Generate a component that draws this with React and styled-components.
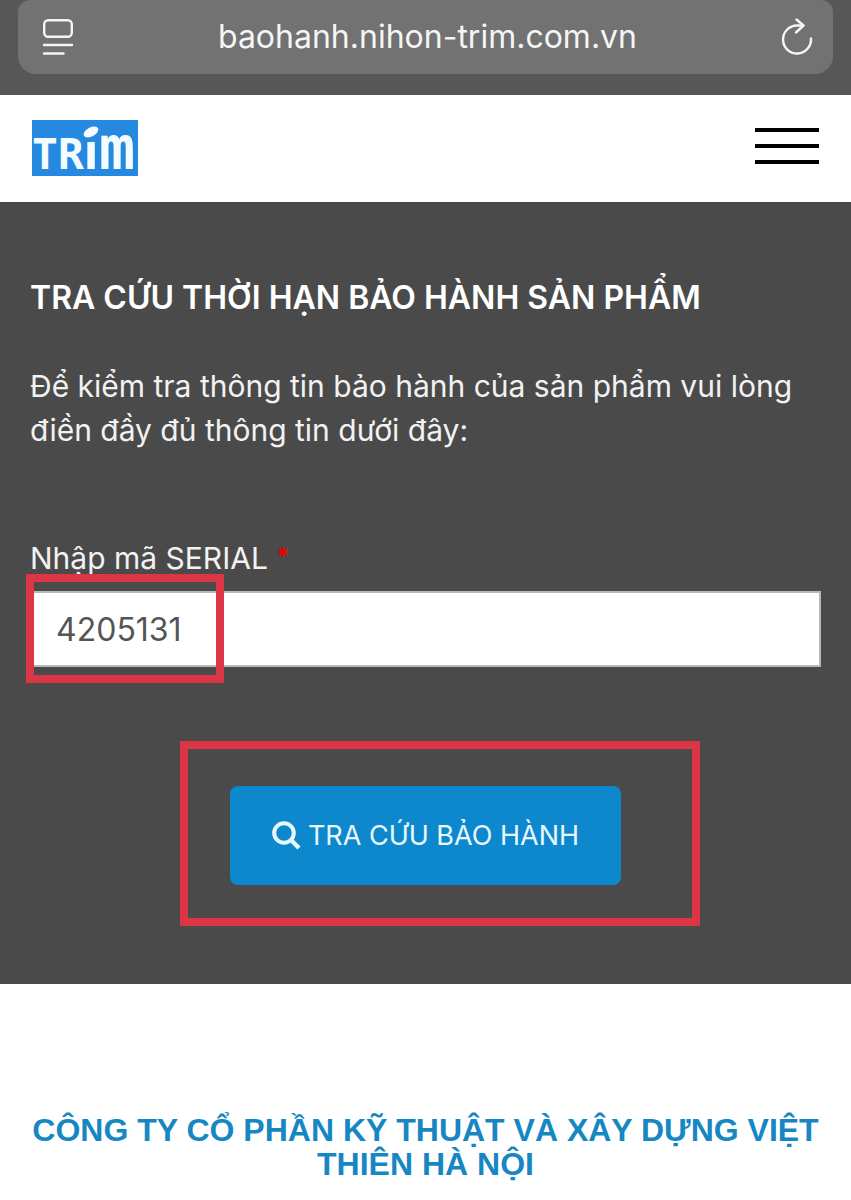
import React, { useState } from 'react'
import styled, { createGlobalStyle } from 'styled-components'

const GlobalStyle = createGlobalStyle`
  * {
    box-sizing: border-box;
  }

  body {
    margin: 0;
    background: #fff;
    font-family: Inter, 'Noto Sans', sans-serif;
  }
`

const BrowserBar = styled.div`
  background: #575757;
  padding: 0 18px 21px;
`

const AddressBar = styled.div`
  display: flex;
  align-items: center;
  justify-content: space-between;
  height: 74px;
  padding: 0 20px 0 24px;
  border-radius: 12px 12px 18px 18px;
  background: #727272;
  color: #f5f5f5;
`

const Address = styled.span`
  font-size: 32px;
  line-height: 40px;
`

const IconButton = styled.button`
  display: flex;
  padding: 0;
  border: 0;
  background: none;
  color: inherit;
  cursor: pointer;
`

const Header = styled.header`
  display: flex;
  align-items: center;
  justify-content: space-between;
  padding: 25px 32px 26px;
  background: #fff;
`

const LogoLink = styled.a`
  display: block;

  svg {
    display: block;
    overflow: visible;
  }
`

const MenuButton = styled.button`
  display: flex;
  flex-direction: column;
  gap: 12px;
  width: 64px;
  padding: 0 0 4px;
  border: 0;
  background: none;
  cursor: pointer;
`

const MenuLine = styled.span`
  width: 100%;
  height: 4px;
  background: #000;
`

const Panel = styled.main`
  padding: 74px 30px 99px;
  background: #4a4a4a;
  color: #fff;
`

const Title = styled.h1`
  margin: 0 0 44px;
  font-size: 32px;
  font-weight: 600;
  line-height: 44px;
`

const Intro = styled.p`
  margin: 0 0 90px;
  color: #f2f2f2;
  font-size: 30px;
  line-height: 44px;
`

const Label = styled.label`
  display: block;
  margin-bottom: 17px;
  color: #f2f2f2;
  font-size: 30px;
  line-height: 32px;
`

const Required = styled.span`
  color: #e60000;
  font-weight: 700;
  font-size: 24px;
  line-height: 0;
  vertical-align: 4px;
`

const Field = styled.div`
  position: relative;
  margin-bottom: 119px;
`

const Input = styled.input`
  display: block;
  width: 100%;
  height: 76px;
  padding: 0 24px;
  border: 2px solid #b9b9b9;
  border-radius: 0;
  background: #fff;
  color: #555;
  font-family: inherit;
  font-size: 32px;
  outline: none;
`

const Actions = styled.div`
  display: flex;
  justify-content: center;
`

const ButtonWrap = styled.div`
  position: relative;
`

const SubmitButton = styled.button`
  display: flex;
  align-items: center;
  gap: 7px;
  padding: 28px 42px;
  border: 0;
  border-radius: 8px;
  background: #0e88cc;
  color: #e8f8ff;
  font-family: inherit;
  font-size: 27px;
  line-height: 43px;
  white-space: nowrap;
  cursor: pointer;
`

// red frame drawn over the part of the page the reader should look at
const Highlight = styled.div`
  position: absolute;
  border: 8px solid #dc3545;
  pointer-events: none;
`

const FieldHighlight = styled(Highlight)`
  top: -17px;
  left: -4px;
  width: 198px;
  height: 109px;
`

const ButtonHighlight = styled(Highlight)`
  top: -45px;
  right: -79px;
  bottom: -41px;
  left: -50px;
`

const Footer = styled.footer`
  padding: 129px 30px 19px;
  color: #1787c3;
  font-family: 'Liberation Sans', Arial, sans-serif;
  font-size: 32px;
  font-weight: 700;
  line-height: 34px;
  text-align: center;
`

const ReaderIcon = () => (
  <svg width="32" height="38" viewBox="0 0 32 38" fill="none" stroke="currentColor" strokeWidth="2.4" strokeLinecap="round">
    <rect x="2.2" y="2.2" width="27.6" height="16.6" rx="4" />
    <path d="M2 27h28M2 35.5h19.5" />
  </svg>
)

const ReloadIcon = () => (
  <svg width="32" height="38" viewBox="0 0 32 38" fill="none" stroke="currentColor" strokeWidth="2.4" strokeLinecap="round" strokeLinejoin="round">
    <path d="M30 20.500A14 14 0 1 1 16 7.500H22" />
    <path d="M15.500 1.500L22.500 7.500L15 14.500" />
  </svg>
)

const SearchIcon = () => (
  <svg width="29" height="29" viewBox="0 0 29 29" fill="none" stroke="currentColor" strokeWidth="4">
    <circle cx="12" cy="12" r="9.800" />
    <path d="M19 19L27 27" strokeWidth="4.500" />
  </svg>
)

const Logo = () => (
  <svg width="106" height="56" viewBox="0 0 106 56" role="img" aria-label="Trim">
    <rect width="106" height="56" fill="#2489df" />
    <g fill="#f4fbff" fontFamily="'DejaVu Sans Mono', monospace" fontWeight="700">
      <text x="0" y="49" fontSize="43">T</text>
      <text x="26" y="49" fontSize="43">R</text>
      <text x="52" y="49" fontSize="52" fontFamily="Roboto, sans-serif">ı</text>
      <text x="67" y="49" fontSize="60">m</text>
    </g>
    <ellipse cx="59" cy="12" rx="8" ry="4.500" fill="#f4fbff" transform="rotate(-28 59 12)" />
  </svg>
)

const App = () => {
  const [serial, setSerial] = useState('4205131')

  return (
    <>
      <GlobalStyle />
      <BrowserBar>
        <AddressBar>
          <IconButton type="button" aria-label="Trình đọc"><ReaderIcon /></IconButton>
          <Address>baohanh.nihon-trim.com.vn</Address>
          <IconButton type="button" aria-label="Tải lại"><ReloadIcon /></IconButton>
        </AddressBar>
      </BrowserBar>
      <Header>
        <LogoLink href="#"><Logo /></LogoLink>
        <MenuButton type="button" aria-label="Menu">
          <MenuLine />
          <MenuLine />
          <MenuLine />
        </MenuButton>
      </Header>
      <Panel>
        <Title>TRA CỨU THỜI HẠN BẢO HÀNH SẢN PHẨM</Title>
        <Intro>
          Để kiểm tra thông tin bảo hành của sản phẩm vui lòng điền đầy đủ thông tin dưới đây:
        </Intro>
        <form onSubmit={e => e.preventDefault()}>
          <Label htmlFor="serial">Nhập mã SERIAL <Required>*</Required></Label>
          <Field>
            <Input id="serial" value={serial} onChange={e => setSerial(e.target.value)} />
            <FieldHighlight />
          </Field>
          <Actions>
            <ButtonWrap>
              <SubmitButton type="submit">
                <SearchIcon />
                TRA CỨU BẢO HÀNH
              </SubmitButton>
              <ButtonHighlight />
            </ButtonWrap>
          </Actions>
        </form>
      </Panel>
      <Footer>CÔNG TY CỔ PHẦN KỸ THUẬT VÀ XÂY DỰNG VIỆT THIÊN HÀ NỘI</Footer>
    </>
  )
}

export default App
